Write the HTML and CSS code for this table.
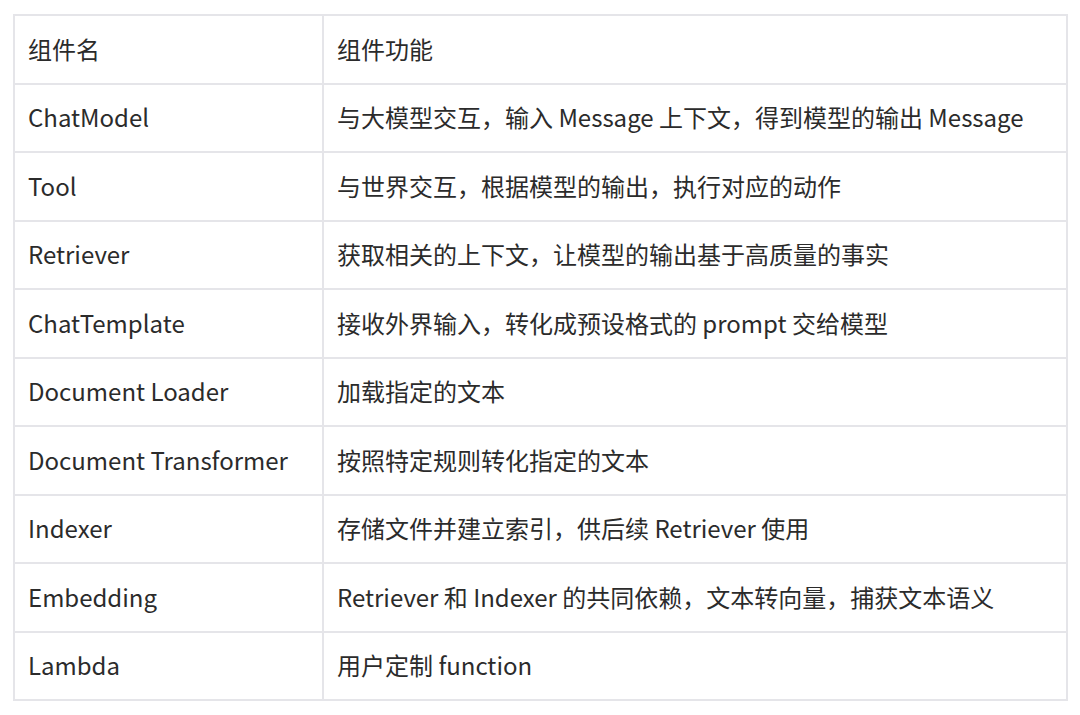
FILE: index.html
```html
<!DOCTYPE html>
<html lang="zh-CN">
<head>
<meta charset="utf-8">
<link rel="stylesheet" href="styles.css">
</head>
<body>
<table class="comp-table">
  <tr><td class="name">组件名</td><td class="desc">组件功能</td></tr>
  <tr><td class="name">ChatModel</td><td class="desc">与大模型交互，输入 Message 上下文，得到模型的输出 Message</td></tr>
  <tr><td class="name">Tool</td><td class="desc">与世界交互，根据模型的输出，执行对应的动作</td></tr>
  <tr><td class="name">Retriever</td><td class="desc">获取相关的上下文，让模型的输出基于高质量的事实</td></tr>
  <tr><td class="name">ChatTemplate</td><td class="desc">接收外界输入，转化成预设格式的 prompt 交给模型</td></tr>
  <tr><td class="name">Document Loader</td><td class="desc">加载指定的文本</td></tr>
  <tr><td class="name">Document Transformer</td><td class="desc">按照特定规则转化指定的文本</td></tr>
  <tr><td class="name">Indexer</td><td class="desc">存储文件并建立索引，供后续 Retriever 使用</td></tr>
  <tr><td class="name">Embedding</td><td class="desc">Retriever 和 Indexer 的共同依赖，文本转向量，捕获文本语义</td></tr>
  <tr><td class="name">Lambda</td><td class="desc">用户定制 function</td></tr>
</table>
</body>
</html>
```
FILE: styles.css
```css
html, body {
  margin: 0;
  padding: 0;
  background: #ffffff;
}
body {
  padding: 14px 12px 0 13px;
  font-family: "Noto Sans CJK SC", "Noto Sans", sans-serif;
  color: #2b2b2b;
}
.comp-table {
  border-collapse: collapse;
  width: 1055px;
  font-size: 24px;
}
.comp-table tr {
  height: 68.5px;
}
.comp-table td {
  border: 2px solid #e5e5e9;
  padding: 0 13px 2px 13px;
  vertical-align: middle;
  line-height: 1.3;
}
.comp-table td.name {
  width: 281px;
}
```
